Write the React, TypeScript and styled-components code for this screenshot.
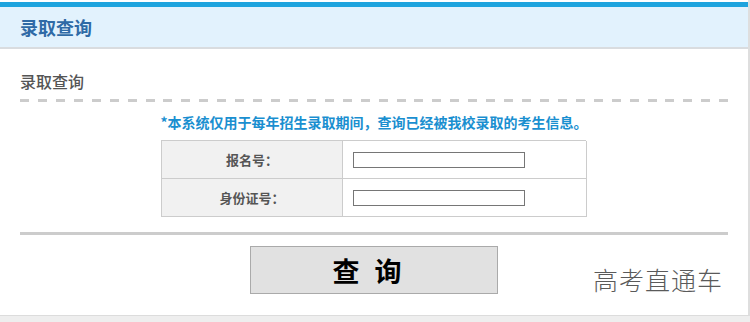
import React from "react";
import styled, { createGlobalStyle } from "styled-components";

const Global = createGlobalStyle`
  html, body { margin: 0; padding: 0; background: #eeeeee; }
  body { font-family: "Noto Sans CJK SC", "Liberation Sans", sans-serif; }
  * { box-sizing: border-box; }
`;

const Wrapper = styled.div`
  position: relative;
  width: 750px;
  padding-top: 2px;
  background: #ffffff;
  border-right: 2px solid #dedede;
  border-bottom: 1px solid #dcdcdc;
`;

const Header = styled.div`
  height: 47px;
  border-top: 5px solid #1ea4de;
  border-bottom: 2px solid #d9dcdf;
  background: #e2f2fd;
  display: flex;
  align-items: center;
  padding-left: 20px;
`;

const HeaderTitle = styled.h1`
  margin: 0;
  font-size: 18px;
  line-height: 22px;
  font-weight: 700;
  color: #2f6aa6;
`;

const Body = styled.div`
  padding: 0 20px 21px;
`;

const SubHead = styled.h2`
  margin: 0;
  padding: 21px 0 7px;
  font-size: 16px;
  line-height: 22px;
  font-weight: 500;
  color: #555555;
`;

const DashedRule = styled.div`
  height: 3px;
  background: repeating-linear-gradient(
    to right,
    #cccccc 0,
    #cccccc 9px,
    transparent 9px,
    transparent 17.93px
  );
`;

const Notice = styled.p`
  margin: 10px 0 8px;
  text-align: center;
  font-size: 14px;
  line-height: 20px;
  font-weight: 700;
  color: #1a8fd0;
`;

const FormGrid = styled.div`
  width: 425px;
  margin: 0 0 0 141px;
  display: grid;
  grid-template-columns: 181px 244px;
  border-top: 1px solid #cccccc;
  border-left: 1px solid #cccccc;
`;

const LabelCell = styled.div`
  height: 38px;
  border-right: 1px solid #cccccc;
  border-bottom: 1px solid #cccccc;
  background: #f1f1f1;
  display: flex;
  align-items: center;
  justify-content: center;
  font-size: 13px;
  font-weight: 700;
  color: #555555;
`;

const InputCell = styled.div`
  height: 38px;
  border-right: 1px solid #cccccc;
  border-bottom: 1px solid #cccccc;
  display: flex;
  align-items: center;
  padding-left: 10px;
`;

const TextInput = styled.input`
  width: 172px;
  height: 16px;
  margin: 0;
  padding: 0 2px;
  border: 1px solid #767676;
  background: #ffffff;
  font-size: 12px;
  outline: none;
`;

const ActionBar = styled.div`
  margin-top: 15px;
  border-top: 3px solid #cccccc;
  padding-top: 11px;
  display: flex;
  justify-content: center;
`;

const SubmitButton = styled.button`
  width: 248px;
  height: 48px;
  margin: 0;
  padding: 0 14px 0 0;
  background: #e1e1e1;
  border: 1px solid #aaaaaa;
  font-family: "Noto Sans CJK SC", sans-serif;
  font-size: 27px;
  font-weight: 700;
  color: #000000;
  word-spacing: 9px;
  cursor: pointer;
`;

const Watermark = styled.div`
  position: absolute;
  left: 593px;
  top: 262px;
  font-size: 25px;
  line-height: 34px;
  font-weight: 300;
  color: #5a5a5a;
  letter-spacing: 1px;
  pointer-events: none;
`;

const fields = ["报名号：", "身份证号："];

export default function App() {
  return (
    <>
      <Global />
      <Wrapper>
        <Header>
          <HeaderTitle>录取查询</HeaderTitle>
        </Header>
        <Body>
          <SubHead>录取查询</SubHead>
          <DashedRule />
          <Notice>*本系统仅用于每年招生录取期间，查询已经被我校录取的考生信息。</Notice>
          <FormGrid>
            {fields.map((f) => (
              <React.Fragment key={f}>
                <LabelCell>{f}</LabelCell>
                <InputCell>
                  <TextInput type="text" />
                </InputCell>
              </React.Fragment>
            ))}
          </FormGrid>
          <ActionBar>
            <SubmitButton type="button">查 询</SubmitButton>
          </ActionBar>
        </Body>
        <Watermark>高考直通车</Watermark>
      </Wrapper>
    </>
  );
}
